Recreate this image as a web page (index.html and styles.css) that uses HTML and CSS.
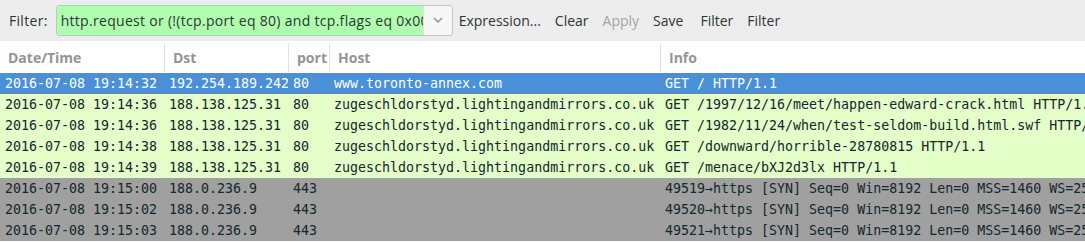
FILE: index.html
```html
<!DOCTYPE html>
<html lang="en">
<head>
    <meta charset="UTF-8">
    <title>Packet list</title>
    <link rel="stylesheet" href="styles.css">
</head>
<body>
    <div class="toolbar">
        <span class="label">Filter:</span>
        <div class="filter-box">
            <div class="filter-text">http.request or (!(tcp.port eq 80) and tcp.flags eq 0x0002)</div>
            <div class="filter-drop">
                <svg width="10" height="6" viewBox="0 0 10 6"><path d="M1 1 L5 5 L9 1" fill="none" stroke="#8a8a8a" stroke-width="1.3"/></svg>
            </div>
        </div>
        <span class="tool first">Expression...</span>
        <span class="tool">Clear</span>
        <span class="tool disabled">Apply</span>
        <span class="tool">Save</span>
        <span class="tool wide">Filter</span>
        <span class="tool">Filter</span>
    </div>

    <div class="packet-list">
        <div class="row head">
            <div class="cell">Date/Time</div>
            <div class="cell">Dst</div>
            <div class="cell">port</div>
            <div class="cell">Host</div>
            <div class="cell">Info</div>
        </div>
        <div class="row selected">
            <div class="cell">2016-07-08 19:14:32</div>
            <div class="cell">192.254.189.242</div>
            <div class="cell">80</div>
            <div class="cell">www.toronto-annex.com</div>
            <div class="cell">GET / HTTP/1.1</div>
        </div>
        <div class="row http">
            <div class="cell">2016-07-08 19:14:36</div>
            <div class="cell">188.138.125.31</div>
            <div class="cell">80</div>
            <div class="cell">zugeschldorstyd.lightingandmirrors.co.uk</div>
            <div class="cell">GET /1997/12/16/meet/happen-edward-crack.html HTTP/1.1</div>
        </div>
        <div class="row http">
            <div class="cell">2016-07-08 19:14:36</div>
            <div class="cell">188.138.125.31</div>
            <div class="cell">80</div>
            <div class="cell">zugeschldorstyd.lightingandmirrors.co.uk</div>
            <div class="cell">GET /1982/11/24/when/test-seldom-build.html.swf HTTP/1.1</div>
        </div>
        <div class="row http">
            <div class="cell">2016-07-08 19:14:38</div>
            <div class="cell">188.138.125.31</div>
            <div class="cell">80</div>
            <div class="cell">zugeschldorstyd.lightingandmirrors.co.uk</div>
            <div class="cell">GET /downward/horrible-28780815 HTTP/1.1</div>
        </div>
        <div class="row http">
            <div class="cell">2016-07-08 19:14:39</div>
            <div class="cell">188.138.125.31</div>
            <div class="cell">80</div>
            <div class="cell">zugeschldorstyd.lightingandmirrors.co.uk</div>
            <div class="cell">GET /menace/bXJ2d3lx HTTP/1.1</div>
        </div>
        <div class="row syn">
            <div class="cell">2016-07-08 19:15:00</div>
            <div class="cell">188.0.236.9</div>
            <div class="cell">443</div>
            <div class="cell"></div>
            <div class="cell">49519→https [SYN] Seq=0 Win=8192 Len=0 MSS=1460 WS=256 SACK_PERM=1</div>
        </div>
        <div class="row syn">
            <div class="cell">2016-07-08 19:15:02</div>
            <div class="cell">188.0.236.9</div>
            <div class="cell">443</div>
            <div class="cell"></div>
            <div class="cell">49520→https [SYN] Seq=0 Win=8192 Len=0 MSS=1460 WS=256 SACK_PERM=1</div>
        </div>
        <div class="row syn">
            <div class="cell">2016-07-08 19:15:03</div>
            <div class="cell">188.0.236.9</div>
            <div class="cell">443</div>
            <div class="cell"></div>
            <div class="cell">49521→https [SYN] Seq=0 Win=8192 Len=0 MSS=1460 WS=256 SACK_PERM=1</div>
        </div>
    </div>
</body>
</html>
```

FILE: styles.css
```css
:root {
    --toolbar-bg: #ededed;
    --text-color: #2e3436;
    --muted-color: #a4a4a4;
    --selected-bg: #4a90d9;
    --http-bg: #e4ffc7;
    --syn-bg: #a0a0a0;
    --row-text: #12272e;
}
body {
    margin: 0;
    padding: 0;
    width: 1085px;
    height: 242px;
    overflow: hidden;
    background-color: #ffffff;
    font-family: 'Open Sans', sans-serif;
    color: var(--text-color);
}
.toolbar {
    display: flex;
    align-items: center;
    height: 41px;
    background-color: var(--toolbar-bg);
    font-size: 14px;
}
.label {
    margin-left: 9px;
    margin-right: 8px;
    letter-spacing: 0.3px;
}
.filter-box {
    display: flex;
    width: 395px;
    height: 29px;
    border: 1px solid #c3c3c0;
    border-radius: 3px;
    overflow: hidden;
    margin-top: -1px;
}
.filter-text {
    flex: 1;
    background-color: #afffaf;
    padding-left: 4px;
    line-height: 29px;
    letter-spacing: 0.3px;
    white-space: nowrap;
    overflow: hidden;
}
.filter-drop {
    width: 28px;
    display: flex;
    align-items: center;
    justify-content: center;
    background-color: #f6f6f6;
    border-left: 1px solid #e0e0e0;
}
.tool {
    margin-left: 14px;
}
.tool.first {
    margin-left: 6px;
}
.tool.wide {
    margin-left: 17px;
}
.tool.disabled {
    color: var(--muted-color);
}
.packet-list {
    font-family: 'DejaVu Sans Mono', monospace;
    font-size: 13.3px;
    color: var(--row-text);
}
.row {
    display: grid;
    grid-template-columns: 164px 124px 41px 331px 1fr;
    height: 21px;
    line-height: 21px;
}
.cell {
    padding-left: 5px;
    white-space: nowrap;
    overflow: hidden;
}
.row.head {
    height: 32px;
    font-family: 'Open Sans', sans-serif;
    font-size: 14px;
    font-weight: bold;
    color: #949494;
    background-color: #ffffff;
}
.row.head .cell {
    padding-left: 8px;
    padding-right: 6px;
    border-left: 1px solid #e2e2e2;
    margin: 2px 0 1px;
    line-height: 29px;
}
.row.head .cell:first-child {
    border-left: none;
}
.row.selected {
    background-color: var(--selected-bg);
    color: #ffffff;
}
.row.http {
    background-color: var(--http-bg);
}
.row.syn {
    background-color: var(--syn-bg);
}
```
